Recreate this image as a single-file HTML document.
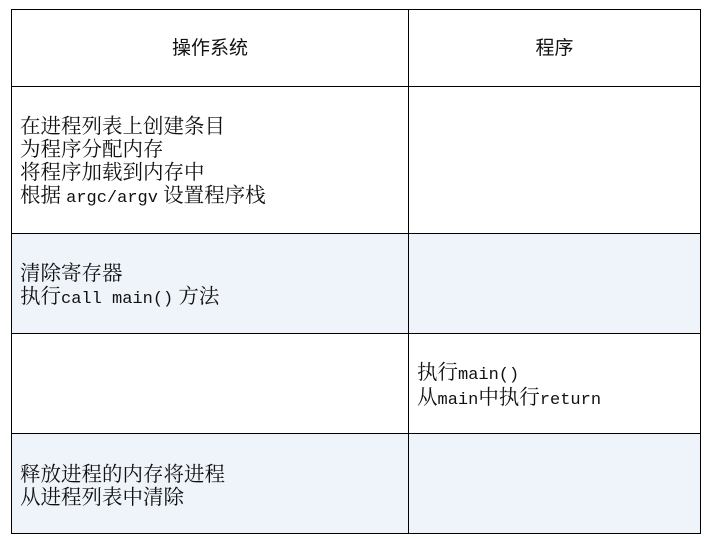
<!DOCTYPE html>
<html><head><meta charset="utf-8"><style>
html,body{margin:0;padding:0;background:#fff;width:709px;height:541px;overflow:hidden}
table{position:absolute;left:11px;top:9px;border-collapse:collapse;font-family:"Liberation Serif","Noto Serif CJK SC","Noto Sans CJK SC",serif;font-size:20.5px;color:#111}
td{border:1.5px solid #000;padding:6px 0 0 8px;vertical-align:middle;line-height:23px;box-sizing:content-box}
.h td{height:76px;text-align:center;padding:0;font-family:"Liberation Sans","Noto Sans CJK SC",sans-serif;font-size:19px;font-weight:normal}
.b td{background:#eff4fb}
.m{font-family:"Liberation Mono",monospace;font-size:17px}
</style></head><body>
<table>
<tr class="h"><td style="width:396px">操作系统</td><td style="width:291px">程序</td></tr>
<tr><td style="height:140px">在进程列表上创建条目<br>为程序分配内存<br>将程序加载到内存中<br>根据 <span class="m">argc/argv</span> 设置程序栈</td><td></td></tr>
<tr class="b"><td style="height:93px">清除寄存器<br>执行<span class="m">call main()</span> 方法</td><td></td></tr>
<tr><td style="height:93px"></td><td>执行<span class="m">main()</span><br>从<span class="m">main</span>中执行<span class="m">return</span></td></tr>
<tr class="b"><td style="height:93px">释放进程的内存将进程<br>从进程列表中清除</td><td></td></tr>
</table>
</body></html>
